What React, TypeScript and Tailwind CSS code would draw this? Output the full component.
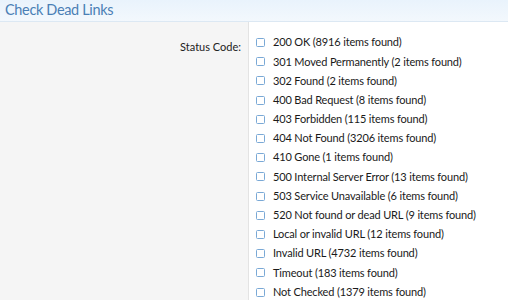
const codes = [
  "200 OK (8916 items found)",
  "301 Moved Permanently (2 items found)",
  "302 Found (2 items found)",
  "400 Bad Request (8 items found)",
  "403 Forbidden (115 items found)",
  "404 Not Found (3206 items found)",
  "410 Gone (1 items found)",
  "500 Internal Server Error (13 items found)",
  "503 Service Unavailable (6 items found)",
  "520 Not found or dead URL (9 items found)",
  "Local or invalid URL (12 items found)",
  "Invalid URL (4732 items found)",
  "Timeout (183 items found)",
  "Not Checked (1379 items found)",
];

export default function App() {
  return (
    <div className="w-[508px] h-[300px] overflow-hidden bg-white font-['Lato',sans-serif]">
      <div className="h-[22px] border-b border-[#dce8f3] bg-gradient-to-b from-[#e9f3fc] to-[#f3f8fd] px-[5px]">
        <h2 className="text-[14.5px] leading-[20px] tracking-[-0.35px] text-[#4a7fb5]">Check Dead Links</h2>
      </div>
      <div className="flex h-full">
        <div className="w-[249px] shrink-0 bg-[#f5f5f5] border-r border-[#e3e3e3] pt-[11px] pr-[7px] text-right">
          <span className="text-[11px] leading-[19px] text-[#222]">Status Code:</span>
        </div>
        <ul className="pt-[11px] pl-[7px] flex flex-col">
          {codes.map((c) => (
            <li key={c} className="flex items-center h-[19.2px] text-[11px] tracking-[-0.15px] text-[#1a1a1a] whitespace-nowrap">
              <span className="w-[9px] h-[9px] border border-[#7aa9d6] rounded-[1.5px] mr-[8px] shrink-0" />
              {c}
            </li>
          ))}
        </ul>
      </div>
    </div>
  );
}
